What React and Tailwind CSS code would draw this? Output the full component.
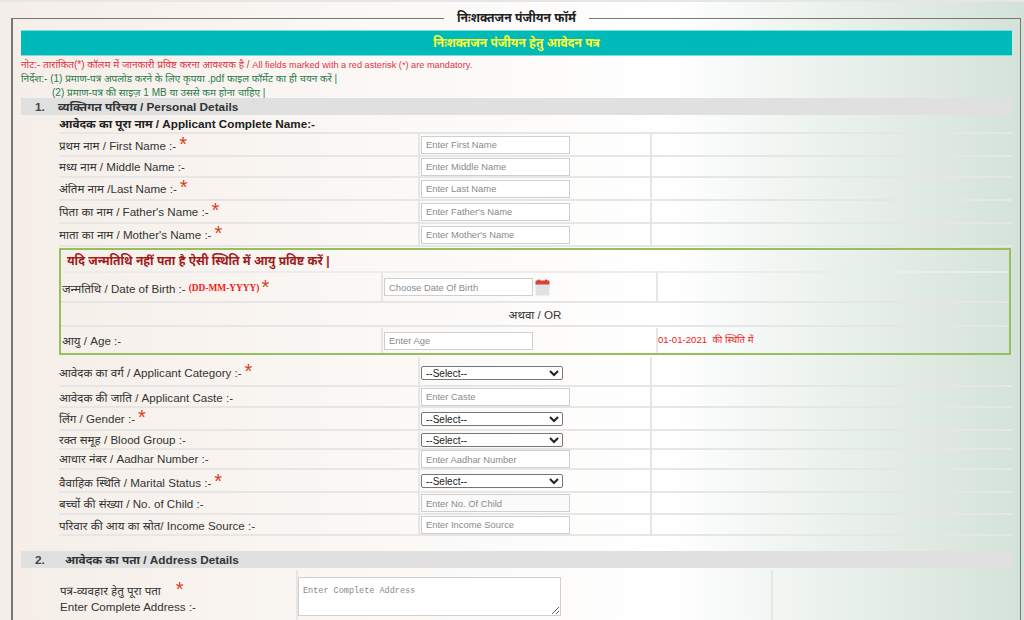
const Star = ({ className = '' }) => (
  <span className={`inline-block h-[12px] -translate-y-[6px] self-center text-[20px] font-normal leading-[20px] text-[#d8401a] ${className}`}>*</span>
);

function TextInput({ placeholder, disabled, w = 'w-[149px]' }) {
  return (
    <input
      placeholder={placeholder}
      disabled={disabled}
      className={`h-[18px] ${w} border border-[#cfcfcf] px-1 text-[9.4px] placeholder:text-[#8a8a8a] ${disabled ? 'bg-[#fafafa]' : 'bg-white'}`}
    />
  );
}

function Dropdown() {
  return (
    <select className="h-[14px] w-[142px] rounded-[2px] border border-[#767676] bg-white text-[10px] leading-none text-[#222]">
      <option>--Select--</option>
    </select>
  );
}

function Row({ h, label, star, labelPt = 'pt-[2px]', children }) {
  return (
    <div className={`grid ${h} grid-cols-[361px_232px_1fr] border-b-2 border-[#e6e6e6]`}>
      <div className={`flex items-center gap-[3px] border-r-2 border-[#e6e6e6] ${labelPt} text-[11.6px] text-[#333]`}>
        <span>{label}</span>
        {star && <Star />}
      </div>
      <div className="flex items-center border-r-2 border-[#e6e6e6] pl-[1px]">{children}</div>
      <div />
    </div>
  );
}

function SectionBar({ num, title, textPad }) {
  return (
    <div className="flex h-[17px] items-center bg-[#e0e0e0] pt-[2px] text-[11.8px] font-bold text-[#333]">
      <span className="w-[14px] shrink-0 translate-x-[14px] text-[#444]">{num}</span>
      <span className={textPad}>{title}</span>
    </div>
  );
}

const personalTop = [
  { h: 'h-[23px]', labelPt: 'pt-[2px]', label: 'प्रथम नाम / First Name :-', star: true, placeholder: 'Enter First Name' },
  { h: 'h-[21px]', labelPt: 'pt-[1px]', label: 'मध्य नाम / Middle Name :-', placeholder: 'Enter Middle Name' },
  { h: 'h-[23px]', labelPt: 'pt-[1px]', label: 'अंतिम नाम /Last Name :-', star: true, placeholder: 'Enter Last Name' },
  { h: 'h-[23px]', labelPt: 'pt-[1px]', label: "पिता का नाम / Father's Name :-", star: true, placeholder: "Enter Father's Name" },
  { h: 'h-[23px]', labelPt: 'pt-[1px]', label: "माता का नाम / Mother's Name :-", star: true, placeholder: "Enter Mother's Name" },
];

function CalendarIcon() {
  return (
    <svg width="15" height="17" viewBox="0 0 15 17" className="ml-[2px]">
      <rect x="0.5" y="1.5" width="14" height="15" rx="1" fill="#dfe3e6" />
      <path d="M0.5 5.5v-3a1 1 0 0 1 1-1h12a1 1 0 0 1 1 1v3z" fill="#d9443a" />
      <rect x="3" y="0.5" width="1.5" height="2" fill="#b93228" />
      <rect x="10.5" y="0.5" width="1.5" height="2" fill="#b93228" />
    </svg>
  );
}

function AgeBox() {
  return (
    <div className="mr-[1px] mt-[1px] h-[107px] border-2 border-[#95c05c]">
      <div className="flex h-[23px] items-center border-b-2 border-[#ececec] pl-[6px] text-[12px] font-bold text-[#a01c1c]">
        यदि जन्मतिथि नहीं पता है ऐसी स्थिति में आयु प्रविष्ट करें |
      </div>
      <div className="grid h-[30px] grid-cols-[322px_275px_1fr] border-b-2 border-[#e6e6e6]">
        <div className="flex items-center border-r-2 border-[#e6e6e6] pl-[1px] pt-[3px] text-[11.6px] text-[#333]">
          <span>जन्मतिथि / Date of Birth :-</span>
          <span className="ml-[3px] font-['Liberation_Serif',serif] text-[9.4px] font-bold text-[#f01c1c]">(DD-MM-YYYY)</span>
          <Star className="ml-[2px]" />
        </div>
        <div className="flex items-center border-r-2 border-[#e6e6e6] pl-[1px]">
          <TextInput placeholder="Choose Date Of Birth" />
          <CalendarIcon />
        </div>
        <div />
      </div>
      <div className="flex h-[24px] items-center justify-center border-b-2 border-[#e6e6e6] pt-[2px] text-[11.6px] text-[#333]">
        अथवा / OR
      </div>
      <div className="grid h-[26px] grid-cols-[322px_275px_1fr] pt-[1px]">
        <div className="flex items-center border-r-2 border-[#e6e6e6] pl-[1px] pt-[1px] text-[11.6px] text-[#333]">आयु / Age :-</div>
        <div className="flex items-center border-r-2 border-[#e6e6e6] pl-[1px]">
          <TextInput placeholder="Enter Age" />
        </div>
        <div className="flex items-center text-[9.6px] text-[#f01c1c]">
          <span className="whitespace-pre">01-01-2021  की स्थिति में</span>
        </div>
      </div>
    </div>
  );
}

export default function App() {
  return (
    <div className="h-[620px] overflow-hidden border-t-2 border-[#e6e6e6] bg-[linear-gradient(to_right,#f5eee8,#ffffff_65%,#d3e2d8)] font-['Liberation_Sans','Noto_Sans_Devanagari','Noto_Sans',sans-serif] text-[#333]">
      <fieldset className="ml-[11px] mr-[3px] mt-[7px] h-[700px] border border-l-2 border-[#777] pl-[8px] pr-[8px] pt-[3px]">
        <legend className="mx-auto px-[13px] text-[12.2px] font-bold leading-[18px] text-[#222]">निःशक्तजन पंजीयन फॉर्म</legend>

        <div className="flex h-[26px] items-center justify-center border-y border-[#7fdcdc] bg-[#00b9b9] text-[12px] font-bold text-[#ffff33]">
          निःशक्तजन पंजीयन हेतु आवेदन पत्र
        </div>

        <div className="h-[42px] pt-[2px] text-[10px] leading-[14px]">
          <p className="text-[#dd3344]">
            नोट:- तारांकित(*) कॉलम में जानकारी प्रविष्ट करना आवश्यक है / <span className="text-[9.2px]">All fields marked with a red asterisk (*) are mandatory.</span>
          </p>
          <p className="text-[#2c7a4a]">निर्देश:- (1) प्रमाण-पत्र अपलोड करने के लिए कृपया .pdf फाइल फॉर्मेट का ही चयन करें |</p>
          <p className="pl-[31px] text-[#2c7a4a]">(2) प्रमाण-पत्र की साइज़ 1 MB या उससे कम होना चाहिए |</p>
        </div>

        <SectionBar num="1." title="व्यक्तिगत परिचय / Personal Details" textPad="pl-[23px]" />

        <div className="ml-[38px]">
          <div className="flex h-[19px] items-center border-b-2 border-[#e6e6e6] text-[11.7px] font-bold text-[#222]">
            आवेदक का पूरा नाम / Applicant Complete Name:-
          </div>

          {personalTop.map((r) => (
            <Row key={r.label} h={r.h} labelPt={r.labelPt} label={r.label} star={r.star}>
              <TextInput placeholder={r.placeholder} />
            </Row>
          ))}

          <AgeBox />

          <div className="mt-[2px]">
            <Row h="h-[30px]" labelPt="pt-[4px]" label="आवेदक का वर्ग / Applicant Category :-" star>
              <div className="pt-[2px]">
                <Dropdown />
              </div>
            </Row>
            <Row h="h-[21px]" label="आवेदक की जाति / Applicant Caste :-">
              <TextInput placeholder="Enter Caste" />
            </Row>
            <Row h="h-[23px]" labelPt="pt-0" label="लिंग / Gender :-" star>
              <Dropdown />
            </Row>
            <Row h="h-[19px]" labelPt="pt-0" label="रक्त समूह / Blood Group :-">
              <Dropdown />
            </Row>
            <Row h="h-[20px]" labelPt="pt-0" label="आधार नंबर / Aadhar Number :-">
              <TextInput placeholder="Enter Aadhar Number" />
            </Row>
            <Row h="h-[23px]" labelPt="pt-[4px]" label="वैवाहिक स्थिति / Marital Status :-" star>
              <Dropdown />
            </Row>
            <Row h="h-[22px]" label="बच्चों की संख्या / No. of Child :-">
              <TextInput placeholder="Enter No. Of Child" disabled />
            </Row>
            <Row h="h-[21px]" label="परिवार की आय का स्रोत/ Income Source :-">
              <TextInput placeholder="Enter Income Source" />
            </Row>
          </div>
        </div>

        <div className="mt-[15px]">
          <SectionBar num="2." title="आवेदक का पता / Address Details" textPad="pl-[30px]" />
        </div>

        <div className="ml-[38px] mt-[2px] grid h-[60px] grid-cols-[239px_475px_1fr]">
          <div className="border-r-2 border-[#e6e6e6] pt-[12px] text-[11.6px] leading-[16px] text-[#333]">
            <div className="flex h-[17px] items-center pl-[1px]">
              <span>पत्र-व्यवहार हेतु पूरा पता</span>
              <Star className="ml-[15px]" />
            </div>
            <div className="pl-[1px]">Enter Complete Address :-</div>
          </div>
          <div className="border-r-2 border-[#e6e6e6] pt-[7px]">
            <textarea
              placeholder="Enter Complete Address"
              className="block h-[39px] w-[263px] border border-[#cfcfcf] bg-white px-[4px] pb-[3px] pt-[7px] font-['Liberation_Mono',monospace] text-[8.5px] placeholder:text-[#8a8a8a]"
            />
          </div>
          <div />
        </div>
      </fieldset>
    </div>
  );
}
